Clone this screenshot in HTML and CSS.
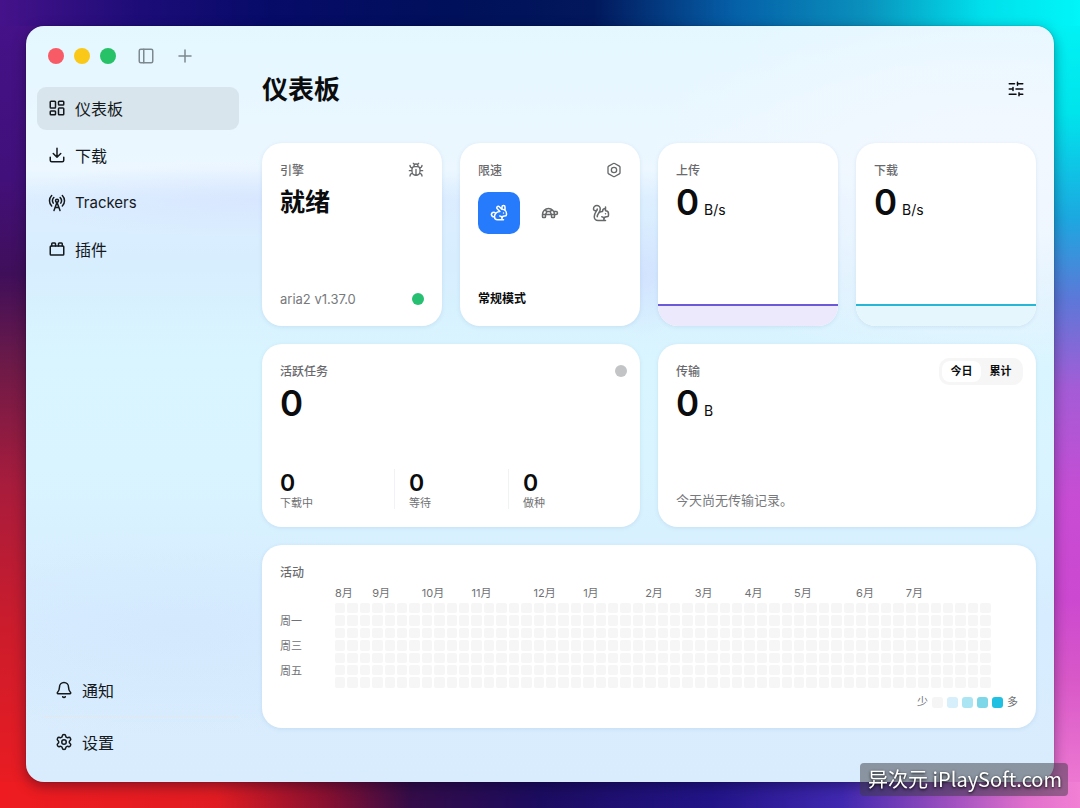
FILE: index.html
```html
<!DOCTYPE html>
<html lang="zh-CN">
	<head>
		<meta charset="utf-8">
		<meta name="viewport" content="width=device-width, initial-scale=1">
		<title>仪表板</title>
		<link rel="stylesheet" href="styles.css">
	</head>
	<body>
		<div class="window">
			<aside class="sidebar">
				<div class="titlebar">
					<button class="light close" aria-label="关闭"></button>
					<button class="light minimize" aria-label="最小化"></button>
					<button class="light maximize" aria-label="最大化"></button>
					<button class="tool" aria-label="侧边栏">
						<svg class="icon" viewBox="0 0 24 24"><rect x="3" y="3" width="18" height="18" rx="2"/><path d="M9 3v18"/></svg>
					</button>
					<button class="tool" aria-label="新建">
						<svg class="icon" viewBox="0 0 24 24"><path d="M4 12h16M12 4v16"/></svg>
					</button>
				</div>

				<nav class="nav">
					<a href="#" class="active">
						<svg class="icon" viewBox="0 0 24 24"><rect x="3" y="3" width="7" height="9" rx="1"/><rect x="14" y="3" width="7" height="5" rx="1"/><rect x="14" y="12" width="7" height="9" rx="1"/><rect x="3" y="16" width="7" height="5" rx="1"/></svg>
						仪表板
					</a>
					<a href="#downloads">
						<svg class="icon" viewBox="0 0 24 24"><path d="M12 15V3M21 15v4a2 2 0 0 1-2 2H5a2 2 0 0 1-2-2v-4M7 10l5 5 5-5"/></svg>
						下载
					</a>
					<a href="#trackers" class="latin">
						<svg class="icon" viewBox="0 0 24 24"><path d="M4.9 16.1C1 12.2 1 5.8 4.9 1.9M7.8 4.7a6.14 6.14 0 0 0-.8 7.5M16.2 4.8c2 2 2.26 5.11.8 7.47M19.1 1.9a9.96 9.96 0 0 1 0 14.1M9.5 18h5M8 22l4-11 4 11"/><circle cx="12" cy="9" r="2"/></svg>
						Trackers
					</a>
					<a href="#plugins">
						<svg class="icon" viewBox="0 0 24 24"><rect x="3" y="8" width="18" height="12" rx="1"/><path d="M10 8V5a1 1 0 0 0-1-1H6a1 1 0 0 0-1 1v3M19 8V5a1 1 0 0 0-1-1h-3a1 1 0 0 0-1 1v3"/></svg>
						插件
					</a>
				</nav>

				<nav class="nav bottom">
					<a href="#notifications">
						<svg class="icon" viewBox="0 0 24 24"><path d="M10.268 21a2 2 0 0 0 3.464 0M3.262 15.326A1 1 0 0 0 4 17h16a1 1 0 0 0 .74-1.673C19.41 13.956 18 12.499 18 8A6 6 0 0 0 6 8c0 4.499-1.411 5.956-2.738 7.326"/></svg>
						通知
					</a>
					<hr>
					<a href="#settings">
						<svg class="icon" viewBox="0 0 24 24"><path d="M9.671 4.136a2.34 2.34 0 0 1 4.659 0 2.34 2.34 0 0 0 3.319 1.915 2.34 2.34 0 0 1 2.33 4.033 2.34 2.34 0 0 0 0 3.831 2.34 2.34 0 0 1-2.33 4.033 2.34 2.34 0 0 0-3.319 1.915 2.34 2.34 0 0 1-4.659 0 2.34 2.34 0 0 0-3.32-1.915 2.34 2.34 0 0 1-2.33-4.033 2.34 2.34 0 0 0 0-3.831A2.34 2.34 0 0 1 6.35 6.051a2.34 2.34 0 0 0 3.319-1.915"/><circle cx="12" cy="12" r="3"/></svg>
						设置
					</a>
				</nav>
			</aside>

			<main class="main">
				<header class="header">
					<h1>仪表板</h1>
					<button class="tool" aria-label="自定义">
						<svg class="icon" viewBox="0 0 24 24"><path d="M10 5H3M12 19H3M14 3v4M16 17v4M21 12h-9M21 19h-5M21 5h-7M8 10v4M8 12H3"/></svg>
					</button>
				</header>

				<div class="cards">
					<section class="card">
						<div class="card-head">
							<h2>引擎</h2>
							<button class="tool small" aria-label="诊断">
								<svg class="icon" viewBox="0 0 24 24"><path d="M12 20v-9M14 7a4 4 0 0 1 4 4v3a6 6 0 0 1-12 0v-3a4 4 0 0 1 4-4zM14.12 3.88 16 2M21 21a4 4 0 0 0-3.81-4M21 5a4 4 0 0 1-3.55 3.97M22 13h-4M3 21a4 4 0 0 1 3.81-4M3 5a4 4 0 0 0 3.55 3.97M6 13H2M8 2l1.88 1.88M9 7.13V6a3 3 0 1 1 6 0v1.13"/></svg>
							</button>
						</div>
						<p class="state">就绪</p>
						<div class="card-foot">
							<span class="gray">aria2 v1.37.0</span>
							<span class="dot online"></span>
						</div>
					</section>

					<section class="card">
						<div class="card-head">
							<h2>限速</h2>
							<button class="tool small" aria-label="限速设置">
								<svg class="icon" viewBox="0 0 24 24"><path d="M21 16V8a2 2 0 0 0-1-1.73l-7-4a2 2 0 0 0-2 0l-7 4A2 2 0 0 0 3 8v8a2 2 0 0 0 1 1.73l7 4a2 2 0 0 0 2 0l7-4A2 2 0 0 0 21 16z"/><circle cx="12" cy="12" r="4"/></svg>
							</button>
						</div>
						<div class="modes">
							<button class="active" aria-label="常规模式">
								<svg class="icon" viewBox="0 0 24 24"><path d="M13 16a3 3 0 0 1 2.24 5M18 12h.01M18 21h-8a4 4 0 0 1-4-4 7 7 0 0 1 7-7h.2L9.6 6.4a1 1 0 1 1 2.8-2.8L15.8 7h.2c3.3 0 6 2.7 6 6v1a2 2 0 0 1-2 2h-1a3 3 0 0 0-3 3M20 8.54V4a2 2 0 1 0-4 0v3M7.612 12.524a3 3 0 1 0-1.6 4.3"/></svg>
							</button>
							<button aria-label="低速模式">
								<svg class="icon" viewBox="0 0 24 24"><path d="m12 10 2 4v3a1 1 0 0 0 1 1h2a1 1 0 0 0 1-1v-3a8 8 0 1 0-16 0v3a1 1 0 0 0 1 1h2a1 1 0 0 0 1-1v-3l2-4h4ZM4.82 7.9 8 10M15.18 7.9 12 10M16.93 10H20a2 2 0 0 1 0 4H2"/></svg>
							</button>
							<button aria-label="计划模式">
								<svg class="icon" viewBox="0 0 24 24"><path d="M15.236 22a3 3 0 0 0-2.2-5M16 20a3 3 0 0 1 3-3h1a2 2 0 0 0 2-2v-2a4 4 0 0 0-4-4V4M18 13h.01M18 6a4 4 0 0 0-4 4 7 7 0 0 0-7 7c0-5 4-5 4-10.5a4.5 4.5 0 1 0-9 0 2.5 2.5 0 0 0 5 0C7 10 3 11 3 17c0 2.8 2.2 5 5 5h10"/></svg>
							</button>
						</div>
						<div class="card-foot">
							<b>常规模式</b>
						</div>
					</section>

					<section class="card">
						<div class="card-head"><h2>上传</h2></div>
						<p class="value"><strong>0</strong><small>B/s</small></p>
						<div class="chart upload"></div>
					</section>

					<section class="card">
						<div class="card-head"><h2>下载</h2></div>
						<p class="value"><strong>0</strong><small>B/s</small></p>
						<div class="chart download"></div>
					</section>

					<section class="card half">
						<div class="card-head outdent">
							<h2>活跃任务</h2>
							<span class="dot"></span>
						</div>
						<p class="value"><strong>0</strong></p>
						<dl class="stats">
							<div><dd>0</dd><dt>下载中</dt></div>
							<div><dd>0</dd><dt>等待</dt></div>
							<div><dd>0</dd><dt>做种</dt></div>
						</dl>
					</section>

					<section class="card half">
						<div class="card-head outdent">
							<h2>传输</h2>
							<div class="tabs">
								<button class="active">今日</button>
								<button>累计</button>
							</div>
						</div>
						<p class="value"><strong>0</strong><small>B</small></p>
						<div class="card-foot">
							<span class="gray">今天尚无传输记录。</span>
						</div>
					</section>

					<section class="card full">
						<div class="card-head"><h2>活动</h2></div>
						<div class="heatmap" id="heatmap"></div>
						<div class="legend">
							少
							<i class="l0"></i>
							<i class="l1"></i>
							<i class="l2"></i>
							<i class="l3"></i>
							<i class="l4"></i>
							多
						</div>
					</section>
				</div>
			</main>
		</div>

		<div class="watermark">异次元 iPlaySoft.com</div>

		<script>
			const heatmap = document.getElementById("heatmap")
			const weeks = 53
			// week in which each month starts
			const months = { 0: "8月", 3: "9月", 7: "10月", 11: "11月", 16: "12月", 20: "1月", 25: "2月", 29: "3月", 33: "4月", 37: "5月", 42: "6月", 46: "7月" }
			const days = ["", "周一", "", "周三", "", "周五", ""]

			function add(className, text) {
				const el = document.createElement("span")
				el.className = className
				el.textContent = text
				heatmap.appendChild(el)
			}

			add("month", "")
			for (let w = 0; w < weeks; w++) add("month", months[w] || "")
			days.forEach((day) => {
				add("day", day)
				for (let w = 0; w < weeks; w++) add("cell", "")
			})
		</script>
	</body>
</html>
```
FILE: styles.css
```css
* {
	box-sizing: border-box;
}
body {
	margin: 0;
	padding: 26px;
	min-height: 100vh;
	color: #0b0c0e;
	font-family: Inter, "Noto Sans CJK SC", sans-serif;
	font-size: 13px;
	/* desktop wallpaper, one strip per edge */
	background:
		linear-gradient(90deg, #45128a 0%, #1c0c78 13%, #060b68 25%, #00105a 42%, #02185c 55%, #0560a8 68%, #0a90bc 80%, #00e0ec 91%, #00f6f8 100%) top / 100% 26px no-repeat,
		linear-gradient(90deg, #ee1c20 0%, #e01c22 20%, #8a1030 30%, #340c48 38%, #1c0c60 50%, #221488 66%, #4028b0 78%, #8c48bc 86%, #e070cc 95%, #f280d4 100%) bottom / 100% 26px no-repeat,
		linear-gradient(180deg, #45128a 0%, #42107a 22%, #400f5a 34%, #6c1a48 45%, #a81c3c 60%, #cc1c2c 78%, #ee1c20 100%) left / 50% 100% no-repeat,
		linear-gradient(180deg, #00f6f8 0%, #00e4ec 14%, #1ca8e0 27%, #5c78d8 37%, #a45cd6 48%, #c84cd4 62%, #cc48d0 74%, #d858c8 84%, #f280d4 100%) right / 50% 100% no-repeat;
}
h1, h2, p, dl, dd {
	margin: 0;
}
button {
	border: none;
	padding: 0;
	background: none;
	color: inherit;
	font: inherit;
}

.icon {
	display: block;
	width: 18px;
	height: 18px;
	fill: none;
	stroke: currentColor;
	stroke-width: 2;
	stroke-linecap: round;
	stroke-linejoin: round;
	flex: none;
}

.window {
	display: flex;
	min-height: calc(100vh - 52px);
	border-radius: 18px;
	background:
		radial-gradient(ellipse 24% 5% at 22% 23%, rgba(214, 226, 255, .6), transparent),
		radial-gradient(ellipse 5% 8% at 60% 33%, rgba(208, 222, 255, .7), transparent),
		radial-gradient(ellipse 30% 14% at 15% 80%, rgba(208, 228, 252, .5), transparent),
		radial-gradient(ellipse 34% 26% at 94% 20%, rgba(242, 248, 255, .9) 30%, transparent),
		linear-gradient(180deg, #e4f7ff 0%, #ecf7ff 19%, #dceeff 23%, #d7eefe 32%, #d9f5ff 44%, #d9f4ff 58%, #d7edff 78%, #d9ecfd 100%);
	box-shadow: 0 4px 14px rgba(0, 0, 30, .4), 0 0 1px rgba(0, 0, 0, .5);
}

.sidebar {
	display: flex;
	flex-direction: column;
	flex: none;
	width: 236px;
	padding: 22px 23px 18px 11px;
}
.titlebar {
	display: flex;
	align-items: center;
	gap: 10px;
	height: 16px;
	margin: 0 0 23px 11px;
	color: #7d898f;
}
.light {
	width: 16px;
	height: 16px;
	border-radius: 50%;
}
.close {
	background-color: #f85b66;
}
.minimize {
	background-color: #f9c818;
}
.maximize {
	background-color: #27c268;
}
.titlebar .tool {
	margin-left: 11px;
}

.nav {
	display: flex;
	flex-direction: column;
	gap: 4px;
}
.nav a {
	display: flex;
	align-items: center;
	gap: 9px;
	height: 43px;
	padding: 0 11px 2px;
	border-radius: 9px;
	color: #15191c;
	font-size: 16px;
	text-decoration: none;
}
.nav .latin {
	padding-bottom: 0;
	font-size: 15px;
}
.nav a.active {
	background-color: rgba(190, 200, 205, .38);
}
.bottom {
	margin-top: auto;
	padding-left: 7px;
}
.bottom hr {
	width: 100%;
	height: 1px;
	margin: 0;
	border: none;
	background-color: #e4e8ee;
}

.main {
	flex: 1;
	min-width: 0;
	padding: 42px 18px 54px 0;
}
.header {
	display: flex;
	align-items: center;
	justify-content: space-between;
	height: 42px;
	margin-bottom: 33px;
	padding-right: 11px;
}
h1 {
	padding-bottom: 4px;
	font-size: 26px;
	font-weight: bold;
}

.cards {
	display: grid;
	grid-template-columns: repeat(4, 1fr);
	grid-auto-rows: minmax(183px, auto);
	gap: 18px;
}
.card {
	display: flex;
	flex-direction: column;
	min-width: 0;
	padding: 18px;
	border-radius: 20px;
	background-color: #fff;
	box-shadow: 0 1px 4px rgba(60, 110, 160, .12);
	overflow: hidden;
}
.half {
	grid-column: span 2;
}
.full {
	grid-column: 1 / -1;
}
.card-head {
	display: flex;
	align-items: center;
	justify-content: space-between;
	height: 18px;
}
.outdent {
	margin-right: -5px;
}
h2 {
	padding-bottom: 2px;
	color: #6a6a6e;
	font-size: 12px;
	font-weight: 500;
}
.small {
	color: #66686a;
}
.small .icon {
	width: 16px;
	height: 16px;
}
.state, .value {
	height: 36px;
	margin-top: 5px;
	line-height: 36px;
}
.state {
	font-size: 25px;
	font-weight: bold;
}
.value {
	display: flex;
	align-items: baseline;
	gap: 5px;
}
.value strong {
	font-size: 35px;
	font-weight: 600;
}
.value small {
	font-size: 14px;
}
.card-foot {
	display: flex;
	align-items: center;
	justify-content: space-between;
	margin-top: auto;
	line-height: 18px;
}
.card-foot b {
	font-size: 12px;
}
.gray {
	color: #77797c;
}
.dot {
	width: 12px;
	height: 12px;
	border-radius: 50%;
	background-color: #c3c4c5;
}
.online {
	background-color: #27c073;
}

.modes {
	display: flex;
	gap: 9px;
	margin-top: 13px;
}
.modes button {
	display: flex;
	align-items: center;
	justify-content: center;
	width: 42px;
	height: 42px;
	border-radius: 10px;
	color: #66686a;
}
.modes .active {
	background-color: #267bfc;
	color: #fff;
}

.chart {
	height: 22px;
	margin: auto -18px -18px;
	border-top: 2px solid;
}
.upload {
	border-color: #6a5ad8;
	background-color: #ece9fc;
}
.download {
	border-color: #27b6d6;
	background-color: #e6f6fd;
}

.stats {
	display: grid;
	grid-template-columns: repeat(3, 1fr);
	margin-top: auto;
}
.stats div {
	display: flex;
	flex-direction: column;
}
.stats div + div {
	padding-left: 14px;
	border-left: 1px solid #f1f2f3;
}
.stats dd {
	font-size: 23px;
	font-weight: 600;
	line-height: 28px;
}
.stats dt {
	color: #6f7174;
	font-size: 11px;
	line-height: 12px;
}

.tabs {
	display: flex;
	padding: 3px;
	border-radius: 10px;
	background-color: #f6f6f7;
}
.tabs button {
	width: 39px;
	height: 21px;
	border-radius: 8px;
	font-size: 11px;
	font-weight: 600;
	line-height: 21px;
}
.tabs .active {
	background-color: #fff;
}

.heatmap {
	display: grid;
	grid-template-columns: 53px repeat(53, 1fr);
	gap: 2px;
	margin: 4px 28px 0 0;
	color: #6f7174;
	font-size: 11px;
	white-space: nowrap;
}
.month {
	width: 0;
	height: 16px;
	line-height: 16px;
}
.day {
	height: 10px;
	line-height: 12px;
}
.cell {
	aspect-ratio: 1;
	border-radius: 2px;
	background-color: #f6f6f7;
}
.legend {
	display: flex;
	align-items: center;
	justify-content: flex-end;
	gap: 4px;
	margin-top: auto;
	color: #6f7174;
	font-size: 11px;
	line-height: 16px;
}
.legend i {
	width: 11px;
	height: 11px;
	border-radius: 3px;
}
.l0 { background-color: #f5f5f6; }
.l1 { background-color: #d6effb; }
.l2 { background-color: #abe5f3; }
.l3 { background-color: #7dd7e8; }
.l4 { background-color: #1fc0e2; }

.watermark {
	position: fixed;
	right: 12px;
	bottom: 12px;
	padding: 0 6px 2px 8px;
	border-radius: 4px;
	background-color: rgba(60, 60, 70, .5);
	color: #fff;
	font-family: "Noto Sans CJK SC", sans-serif;
	font-size: 20px;
	line-height: 31px;
	text-shadow: 0 1px 3px #000;
}
```
